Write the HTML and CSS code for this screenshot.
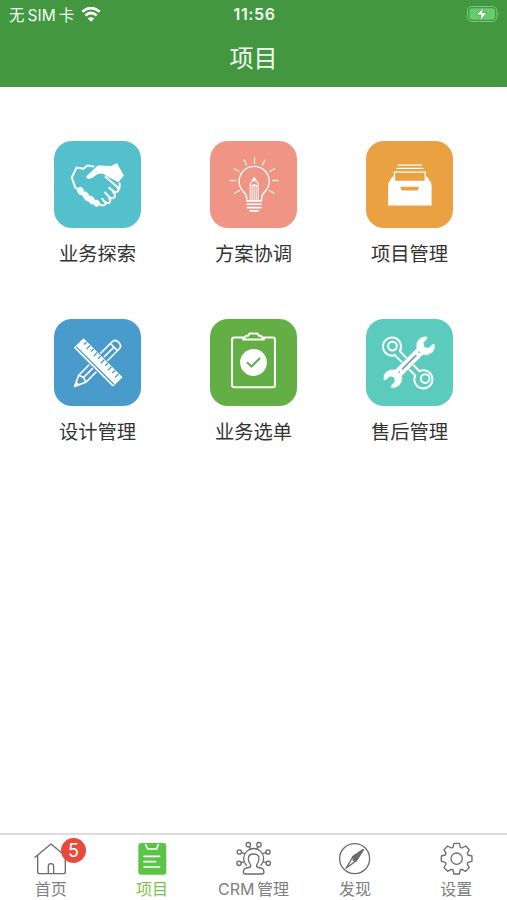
FILE: index.html
```
<!DOCTYPE html>
<html lang="zh-CN">
<head>
  <meta charset="UTF-8">
  <meta name="viewport" content="width=device-width, initial-scale=1">
  <title>项目</title>
  <link rel="stylesheet" href="styles.css">
</head>
<body>
  <header class="header">
    <div class="status-bar">
      <div class="carrier">
        <span>无 SIM 卡</span>
        <svg class="wifi" viewBox="0 0 60 44">
          <path d="M4 14Q30-9 56 14" fill="none" stroke="#fff" stroke-width="8"/>
          <path d="M13 25Q30 10 47 25" fill="none" stroke="#fff" stroke-width="8"/>
          <path d="M20 34Q30 26 40 34L30 44z" fill="#fff"/>
        </svg>
      </div>
      <span class="time">11:56</span>
      <svg class="battery" viewBox="0 0 99 48">
        <rect x="1.500" y="1.500" width="88" height="45" rx="13" fill="none" stroke="#7fc483" stroke-width="3"/>
        <rect x="7" y="7" width="77" height="34" rx="8" fill="#65cd6c"/>
        <path d="M93 17q5 7 0 14z" fill="#7fc483"/>
        <path d="M50 3L28 27h14L38 46L60 20H46z" fill="#fff" stroke="#439741" stroke-width="2"/>
      </svg>
    </div>
    <h1 class="title">项目</h1>
  </header>

  <main class="grid">
    <a class="item">
      <svg class="tile teal" viewBox="20 17 260 260">
        <path class="line" d="M84 157L73 126L88 96L108 100L120 90L138 93M84 157L95 162"/>
        <path class="solid" d="M117 122L149 92Q156 88 166 91L191 92L208 83L229 120L212 140L176 121Q160 108 145 119Q130 132 120 129Q114 127 117 122z"/>
        <path class="line" d="M174 124L205 151Q216 160 210 168Q203 173 195 165L185 157M210 168Q218 158 216 143M196 168Q208 182 198 187Q190 191 181 180L173 171M185 187Q192 198 184 202Q175 205 164 190M174 205Q168 212 159 208"/>
        <path class="dots" d="M98 164L101 169M113 178L120 187M130 191L134 196M147 203L148 204"/>
      </svg>
      <span class="label">业务探索</span>
    </a>
    <a class="item">
      <svg class="tile coral" viewBox="20 17 260 260">
        <path class="line thin" d="M130 192Q131 179 119 167Q107 154 107 138A45 45 0 0 1 197 138Q197 154 185 167Q173 179 174 192"/>
        <path class="line thin cream" d="M153 67V84M122 74L129 89M184 74L177 89M92 100L106 108M213 100L199 108M80 135H97M207 135H223M94 173L108 165M211 173L197 165"/>
        <path class="line fine" d="M140 192V145L152 126L164 145V192M146 149V192M152 150V192M158 149V192M140 148L146 151L152 147L158 151L164 148"/>
        <path class="solid" d="M146 137L152 126L158 137z"/>
        <path class="line mid" d="M130 196H174M131 206H173M132 216H172M140 226H164"/>
      </svg>
      <span class="label">方案协调</span>
    </a>
    <a class="item">
      <svg class="tile orange" viewBox="20 17 260 260">
        <path class="line thin flat" d="M115 89H187M110 99H192"/>
        <path class="line thin flat" d="M105 138V110H197V138"/>
        <path class="solid" fill-rule="evenodd" d="M86 145L98 124H103V136H199V124H203L216 145V210H86zM122 154L127 165H174L179 154z"/>
      </svg>
      <span class="label">项目管理</span>
    </a>
    <a class="item">
      <svg class="tile blue" viewBox="20 17 260 260">
        <g transform="translate(151 149) rotate(-45)">
          <path class="line mid" d="M-66-15H75Q88-15 88 0Q88 15 75 15H-66L-98 0zM-66-15L-60 0L-66 15M-60 0H67M68-15V15"/>
          <path class="solid" d="M-97 0L-84-6V6z"/>
        </g>
        <g transform="translate(152 147) rotate(45)">
          <rect class="ruler" x="-84" y="-22" width="168" height="44"/>
          <path class="ticks" d="M-68-19V-8M-53-19V-4M-38-19V-8M-23-19V-4M-8-19V-8M7-19V-4M22-19V-8M37-19V-4M52-19V-8M67-19V-4M-80 13H80"/>
        </g>
      </svg>
      <span class="label">设计管理</span>
    </a>
    <a class="item">
      <svg class="tile green" viewBox="20 17 260 260">
        <path class="line" d="M119 72H92Q86 72 86 78V215Q86 221 92 221H208Q214 221 214 215V78Q214 72 208 72H181M119 78L128 67H134L138 60H162L166 67H172L181 78z"/>
        <circle class="solid" cx="150" cy="147" r="40"/>
        <path class="check" d="M132 148L144 159L168 135"/>
      </svg>
      <span class="label">业务选单</span>
    </a>
    <a class="item">
      <svg class="tile mint" viewBox="20 17 260 260">
        <path class="line" d="M121 113L180 173M106 125L167 186"/>
        <path class="line" d="M106 125A27 27 0 1 1 121 113M180 173A27 27 0 1 1 167 186"/>
        <circle class="line" cx="99" cy="98" r="13"/>
        <circle class="line" cx="197" cy="195" r="13"/>
        <g transform="translate(149 146) rotate(-45)">
          <path class="wrench" d="M-44-14H44Q52-28 70-29Q84-28 93-17L89-11L72-10L65 0L72 10L89 11L93 17Q84 28 70 29Q52 28 44 14H-44Q-52 28-70 29Q-84 28-93 17L-89 11L-72 10L-65 0L-72-10L-89-11L-93-17Q-84-28-70-29Q-52-28-44-14z"/>
          <path class="groove" d="M-28 0H28"/>
          <circle class="hole" cx="-42" cy="0" r="3"/>
          <circle class="hole" cx="42" cy="0" r="3"/>
        </g>
      </svg>
      <span class="label">售后管理</span>
    </a>
  </main>

  <nav class="tabs">
    <a class="tab">
      <svg class="tab-icon" viewBox="-50 -50 100 100">
        <path d="M-47-4L1-44L49-4M-39-10V39Q-39 45-33 45H38Q44 45 44 39V-8M-7 45V23Q-7 15 1 15Q9 15 9 23V45"/>
      </svg>
      <span>首页</span>
      <b class="badge">5</b>
    </a>
    <a class="tab active">
      <svg class="tab-icon" viewBox="-50 -50 100 100">
        <rect class="sheet" x="-40" y="-47" width="84" height="95" rx="9"/>
        <path class="sheet-lines" d="M-18-42L-12-29H15L20-42M-23-7H24M-23 9H12M-23 25H24"/>
      </svg>
      <span>项目</span>
    </a>
    <a class="tab">
      <svg class="tab-icon" viewBox="-50 -50 100 100">
        <path d="M-9 19Q-16 9-16 0Q-16-14 0-14Q16-14 16 0Q16 9 9 19V24Q13 27 22 28Q31 31 31 41Q31 46 25 46H-25Q-31 46-31 41Q-31 31-22 28Q-13 27-9 24z"/>
        <path d="M-22 20A30 30 0 1 1 22 20M-9-30L-13-35M9-30L13-35M-27-15L-36-18M27-15L36-18M-29 10L-37 12M29 10L37 12"/>
        <circle cx="-16" cy="-42" r="6.5"/>
        <circle cx="16" cy="-42" r="6.5"/>
        <circle cx="-43" cy="-20" r="6.5"/>
        <circle cx="43" cy="-20" r="6.5"/>
        <circle cx="-44" cy="14" r="6.5"/>
        <circle cx="44" cy="14" r="6.5"/>
      </svg>
      <span>CRM 管理</span>
    </a>
    <a class="tab">
      <svg class="tab-icon" viewBox="-50 -50 100 100">
        <circle cx="0" cy="0" r="45"/>
        <path d="M26-27L5 6L-26 29L-5-6z"/>
        <path class="needle" d="M26-27L5 6L-4 5L-5-6z"/>
      </svg>
      <span>发现</span>
    </a>
    <a class="tab">
      <svg class="tab-icon" viewBox="-50 -50 100 100">
        <path d="M-8-46H8L11-34L16-32L27-38L38-27L32-16L34-11L46-8V8L34 11L32 16L38 27L27 38L16 32L11 34L8 46H-8L-11 34L-16 32L-27 38L-38 27L-32 16L-34 11L-46 8V-8L-34-11L-32-16L-38-27L-27-38L-16-32L-11-34z"/>
        <circle cx="0" cy="0" r="17"/>
      </svg>
      <span>设置</span>
    </a>
  </nav>
</body>
</html>
```
FILE: styles.css
```
* {
  box-sizing: border-box;
}

body {
  margin: 0;
  height: 100vh;
  display: flex;
  flex-direction: column;
  overflow: hidden;
  background: #fff;
  color: #333;
  font-family: Inter, "Noto Sans CJK SC", sans-serif;
}

.header {
  height: 87px;
  background: #439741;
  color: #f2fff0;
}

.status-bar {
  display: grid;
  grid-template-columns: 1fr auto 1fr;
  align-items: center;
  height: 28px;
  padding: 0 7px 0 9px;
  font-size: 15.5px;
}

.carrier {
  display: flex;
  align-items: center;
  gap: 7px;
  white-space: nowrap;
  word-spacing: -1.3px;
}

.wifi {
  width: 20px;
  height: 15px;
}

.time {
  font-size: 16px;
  font-weight: 600;
  letter-spacing: 0.6px;
}

.battery {
  width: 33px;
  height: 16px;
  justify-self: end;
}

.title {
  margin: 0;
  font-size: 24px;
  font-weight: 400;
  line-height: 61px;
  text-align: center;
}

/* Módulos */
.grid {
  flex: 1;
  display: grid;
  grid-template-columns: repeat(3, 156px);
  grid-auto-rows: 178px;
  justify-content: center;
  padding-top: 54px;
}

.item {
  display: flex;
  flex-direction: column;
  align-items: center;
}

.tile {
  width: 87px;
  height: 87px;
  border-radius: 18px;
}

.teal { background: #54c0cb; }
.coral { background: #f09585; }
.orange { background: #e9a141; }
.blue { background: #489bca; }
.green { background: #63ae45; }
.mint { background: #5acbbd; }

.label {
  margin-top: 11px;
  font-size: 19.3px;
  line-height: 30px;
}

.solid {
  fill: #fff;
}

.line {
  fill: none;
  stroke: #fff;
  stroke-width: 6;
  stroke-linecap: round;
  stroke-linejoin: round;
}

.mid { stroke-width: 5; }
.thin { stroke-width: 4; }
.fine { stroke-width: 3; }
.cream { stroke: #ffe8cf; }
.flat { stroke-linecap: butt; stroke-linejoin: miter; }

.dots {
  fill: none;
  stroke: #fff;
  stroke-width: 19;
  stroke-linecap: round;
}

.ruler {
  fill: #fff;
  stroke: #489bca;
  stroke-width: 3;
}

.ticks {
  fill: none;
  stroke: #489bca;
  stroke-width: 4;
}

.check {
  fill: none;
  stroke: #63ae45;
  stroke-width: 6;
  stroke-linecap: round;
}

.wrench {
  fill: #fff;
  stroke: #5acbbd;
  stroke-width: 2;
}

.groove {
  stroke: #7b9fae;
  stroke-width: 5;
  stroke-linecap: round;
}

.hole {
  fill: #5acbbd;
}

/* Barra inferior */
.tabs {
  display: grid;
  grid-template-columns: repeat(5, 1fr);
  height: 67px;
  border-top: 2px solid #dcdcdc;
}

.tab {
  position: relative;
  display: flex;
  flex-direction: column;
  align-items: center;
  padding-top: 7px;
  color: #808080;
  font-size: 16px;
  line-height: 26px;
  white-space: nowrap;
  word-spacing: -2px;
}

.tab.active {
  color: #7fbe4b;
}

.tab-icon {
  width: 33.3px;
  height: 33.3px;
  flex: none;
  margin-bottom: 1px;
  overflow: visible;
  fill: none;
  stroke: #6c6c6c;
  stroke-width: 4;
  stroke-linejoin: round;
  stroke-linecap: round;
}

.sheet {
  fill: #5bc446;
  stroke: none;
}

.sheet-lines {
  stroke: #fff;
  stroke-width: 5;
}

.needle {
  fill: #6c6c6c;
}

.badge {
  position: absolute;
  top: 3px;
  left: 61px;
  width: 25px;
  height: 25px;
  border-radius: 50%;
  background: #e54b3c;
  color: #fff;
  font-size: 18px;
  font-weight: 400;
  line-height: 25px;
  text-align: center;
}
```
